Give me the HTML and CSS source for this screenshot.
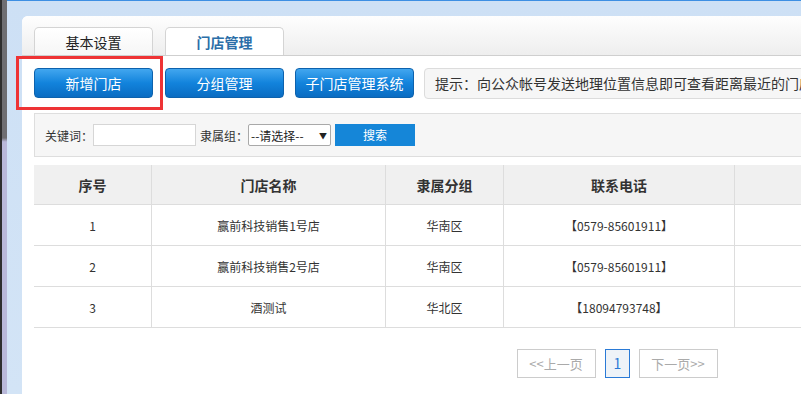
FILE: index.html
```html
<!DOCTYPE html>
<html lang="zh-CN">
<head>
  <meta charset="UTF-8" />
  <title>门店管理</title>
  <link rel="stylesheet" href="styles.css">
</head>
<body>
  <div class="edge"></div>
  <div class="frame">
    <div class="panel">
      <div class="tabs">
        <a class="tab" href="#">基本设置</a>
        <a class="tab active" href="#">门店管理</a>
      </div>

      <div class="content">
        <div class="toolbar">
          <a class="btn" href="#">新增门店</a>
          <a class="btn" href="#">分组管理</a>
          <a class="btn" href="#">子门店管理系统</a>
          <div class="hint">提示：向公众帐号发送地理位置信息即可查看距离最近的门店</div>
          <div class="mark"></div>
        </div>

        <div class="search">
          <label>关键词：</label>
          <input class="keyword" type="text">
          <label>隶属组：</label>
          <span class="select">--请选择--<span class="arrow">▼</span></span>
          <a class="search-btn" href="#">搜索</a>
        </div>

        <table class="list">
          <thead>
            <tr>
              <th class="c-no">序号</th>
              <th class="c-name">门店名称</th>
              <th class="c-group">隶属分组</th>
              <th class="c-phone">联系电话</th>
              <th class="c-op"></th>
            </tr>
          </thead>
          <tbody>
            <tr>
              <td>1</td>
              <td>赢前科技销售1号店</td>
              <td>华南区</td>
              <td>【0579-85601911】</td>
              <td></td>
            </tr>
            <tr>
              <td>2</td>
              <td>赢前科技销售2号店</td>
              <td>华南区</td>
              <td>【0579-85601911】</td>
              <td></td>
            </tr>
            <tr>
              <td>3</td>
              <td>酒测试</td>
              <td>华北区</td>
              <td>【18094793748】</td>
              <td></td>
            </tr>
          </tbody>
        </table>

        <div class="pager">
          <span class="page disabled">&lt;&lt;上一页</span>
          <span class="page current">1</span>
          <span class="page disabled">下一页&gt;&gt;</span>
        </div>
      </div>
    </div>
  </div>
</body>
</html>
```

FILE: styles.css
```css
html, body {
  margin: 0;
  padding: 0;
  height: 100%;
  overflow: hidden;
}

body {
  display: flex;
  font-family: "Noto Sans CJK SC", "Noto Sans", sans-serif;
  font-size: 12px;
  color: #333;
  background-color: #cfe1f5;
}

a {
  text-decoration: none;
}

.edge {
  flex: 0 0 7px;
  background:
    linear-gradient(to right, #2e2e2e 0, #2e2e2e 2px, transparent 2px),
    linear-gradient(to bottom, #6e6e72 0, #6e6e72 35%, #b9b8d9 36%);
}

.frame {
  flex: 0 0 1300px;
  border-top: 1px solid #3d8fe3;
  background: linear-gradient(to bottom, #cde0f5, #d3e4f6);
  padding: 15px 0 0 15px;
}

.panel {
  height: 100%;
  background-color: #fff;
  border-radius: 6px 0 0 0;
}

.tabs {
  display: flex;
  gap: 12px;
  padding: 11px 0 0 12px;
  border-radius: 6px 0 0 0;
  background: linear-gradient(to bottom, #fefefe, #eeeeee);
  border-bottom: 1px solid #cfcfcf;
}

.tab {
  width: 117px;
  height: 27px;
  line-height: 28px;
  text-align: center;
  font-size: 14px;
  color: #222;
  background: linear-gradient(to bottom, #ffffff, #f6f6f6);
  border: 1px solid #d4d4d4;
  border-bottom: none;
  border-radius: 5px 5px 0 0;
}

.tab.active {
  color: #2b6ea8;
  font-weight: bold;
  background: #fff;
}

.content {
  width: 1166px;
  padding: 12px 0 0 12px;
}

.toolbar {
  position: relative;
  display: flex;
  gap: 12px;
  align-items: flex-start;
}

.btn {
  width: 117px;
  height: 28px;
  line-height: 28px;
  text-align: center;
  font-size: 14px;
  color: #fff;
  border: 1px solid #0d62ad;
  border-radius: 4px;
  background: linear-gradient(to bottom, #42a6ef, #1283dc 50%, #0a6cc2);
}

.btn + .btn + .btn {
  margin-left: -1px;
}

.hint {
  margin-left: -2px;
  flex: 1;
  height: 29px;
  line-height: 29px;
  padding-left: 10px;
  white-space: nowrap;
  overflow: hidden;
  font-size: 14px;
  color: #333;
  background-color: #f6f6f6;
  border: 1px solid #dcdcdc;
  border-radius: 4px;
}

.mark {
  position: absolute;
  left: -18px;
  top: -12px;
  width: 141px;
  height: 48px;
  border: 3px solid #ee3335;
}

.search {
  display: flex;
  align-items: center;
  margin-top: 14px;
  height: 42px;
  padding-left: 10px;
  background-color: #f6f6f6;
  border: 1px solid #dedede;
}

.search label {
  font-size: 12px;
  color: #333;
}

.keyword {
  box-sizing: border-box;
  width: 103px;
  height: 22px;
  margin: 0 4px 0 0;
  border: 1px solid #d6d6d6;
  background: #fff;
}

.select {
  box-sizing: border-box;
  display: flex;
  justify-content: space-between;
  align-items: center;
  width: 83px;
  height: 22px;
  padding: 0 3px 0 2px;
  font-size: 12px;
  color: #222;
  background: #fff;
  border: 1px solid #a9a9a9;
  border-radius: 2px;
}

.arrow {
  font-size: 8px;
}

.search-btn {
  width: 80px;
  height: 22px;
  line-height: 22px;
  margin-left: 4px;
  text-align: center;
  font-size: 12px;
  color: #fff;
  background-color: #1586d8;
}

.list {
  width: 100%;
  margin-top: 8px;
  border-collapse: collapse;
  table-layout: fixed;
}

.list th {
  height: 39px;
  font-size: 14px;
  font-weight: bold;
  color: #333;
  background-color: #f0f0f0;
}

.list td {
  height: 40px;
  text-align: center;
  font-size: 12px;
  color: #333;
}

.list th, .list td {
  padding: 0;
  border-bottom: 1px solid #dddddd;
  border-left: 1px solid #dddddd;
}

.list th:first-child, .list td:first-child {
  border-left: none;
}

.c-no { width: 117px; }
.c-name { width: 233px; }
.c-group { width: 117px; }
.c-phone { width: 230px; }

.pager {
  display: flex;
  justify-content: center;
  gap: 9px;
  margin-top: 21px;
}

.page {
  height: 27px;
  line-height: 27px;
  padding: 0 8px;
  font-size: 13px;
  border: 1px solid #cccccc;
}

.page.disabled {
  width: 61px;
  color: #aaaaaa;
  text-align: center;
}

.page.current {
  width: 7px;
  color: #2a7ad6;
  background-color: #eef3f8;
  border-color: #2a7ad6;
  font-size: 14px;
}
```
